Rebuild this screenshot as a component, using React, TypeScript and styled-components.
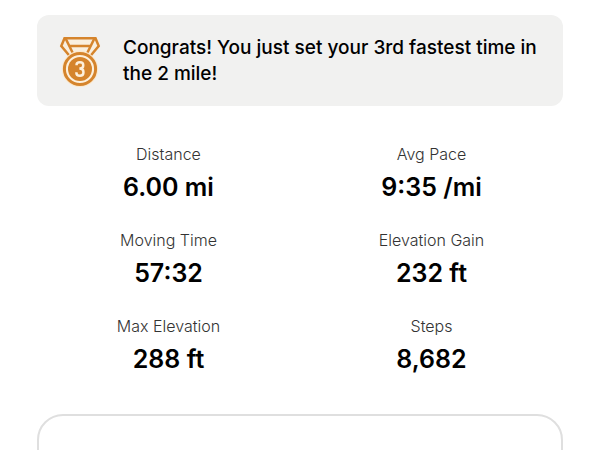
import React from "react";
import styled, { createGlobalStyle } from "styled-components";

const GlobalStyle = createGlobalStyle`
  * { box-sizing: border-box; }
  body {
    margin: 0;
    background: #fff;
    color: #000;
    font-family: Inter, "Liberation Sans", sans-serif;
  }
  #root { overflow: hidden; height: 100vh; }
`;

const Page = styled.main`
  padding: 15px 37px 0;
`;

const Banner = styled.section`
  display: flex;
  align-items: center;
  gap: 20px;
  padding: 20px 20px 19px;
  border-radius: 12px;
  background: #f1f1f0;
`;

const MedalIcon = styled.svg`
  flex: none;
  width: 46px;
  height: 52px;
`;

const Message = styled.p`
  margin: 0;
  font-size: 19px;
  line-height: 26px;
  font-weight: 500;
`;

const Stats = styled.dl`
  display: grid;
  grid-template-columns: 1fr 1fr;
  row-gap: 26px;
  margin: 37px 0 0;
`;

const Stat = styled.div`
  text-align: center;
`;

const Label = styled.dt`
  color: #333;
  font-size: 16px;
  line-height: 22px;
  font-weight: 300;
`;

const Value = styled.dd`
  margin: 6px 0 0;
  font-size: 25px;
  line-height: 32px;
  font-weight: 600;
`;

const Panel = styled.section`
  height: 120px;
  margin-top: 39px;
  border: 2px solid #dfdfdf;
  border-radius: 26px;
`;

const stats = [
  ["Distance", "6.00 mi"],
  ["Avg Pace", "9:35 /mi"],
  ["Moving Time", "57:32"],
  ["Elevation Gain", "232 ft"],
  ["Max Elevation", "288 ft"],
  ["Steps", "8,682"],
];

function Medal() {
  return (
    <MedalIcon viewBox="0 0 46 52" aria-hidden="true">
      <path d="M6 2H40L43.5 11L34 23H12L2.5 11Z" fill="#f9efdf" />
      <g fill="none" stroke="#d5842c" strokeWidth="2.5">
        <path d="M13.5 22L4.3 11L7.5 3.2H38.5L41.7 11L32.5 22" />
        <path d="M8.5 3.2L16.5 19.5M37.5 3.2L29.5 19.5M12.5 10.9H33.5" />
      </g>
      <circle cx="23" cy="34" r="18.2" fill="#fbe9cf" />
      <circle cx="23" cy="34" r="15.6" fill="#fdf0dc" stroke="#d5842c" strokeWidth="3" />
      <circle cx="23" cy="34" r="12" fill="#d5842c" />
      <path
        d="M19.6 30.2V29.6Q19.6 27.2 22.9 27.2Q26.2 27.2 26.2 29.8V30.8Q26.2 33.5 22.4 33.6Q26.4 33.8 26.4 36.8V37.8Q26.4 40.8 22.9 40.8Q19.4 40.8 19.4 38V37.2"
        fill="none"
        stroke="#fdf0dc"
        strokeWidth="2.5"
      />
    </MedalIcon>
  );
}

export default function App() {
  return (
    <>
      <GlobalStyle />
      <Page>
        <Banner>
          <Medal />
          <Message>Congrats! You just set your 3rd fastest time in the 2 mile!</Message>
        </Banner>
        <Stats>
          {stats.map(([label, value]) => (
            <Stat key={label}>
              <Label>{label}</Label>
              <Value>{value}</Value>
            </Stat>
          ))}
        </Stats>
        <Panel />
      </Page>
    </>
  );
}
